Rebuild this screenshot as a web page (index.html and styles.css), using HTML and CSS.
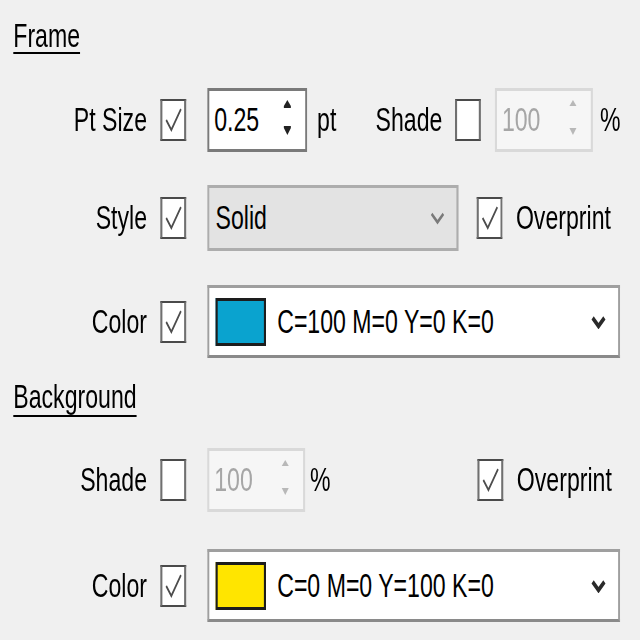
FILE: index.html
```html
<!DOCTYPE html>
<html>
<head>
<meta charset="utf-8">
<link rel="stylesheet" href="styles.css">
</head>
<body>
<div class="frame">
<div class="dialog">
  <div class="heading h1">Frame</div>

  <div class="row r1">
    <span class="label">Pt Size</span>
    <span class="cb"><svg viewBox="0 0 34 42" preserveAspectRatio="none"><polyline points="6,21 14,32 29,9" /></svg></span>
    <div class="spin s1">
      <span class="val">0.25</span>
      <span class="arrows"><svg viewBox="0 0 12 40"><polygon points="6,0 11,6 1,6"/><rect x="1" y="6" width="10" height="2"/><polygon points="1,28 11,28 6,35"/><rect x="1" y="26" width="10" height="2"/></svg></span>
    </div>
    <span class="unit pt">pt</span>
    <span class="label2">Shade</span>
    <span class="cb cb2"></span>
    <div class="spin s2 disabled">
      <span class="val">100</span>
      <span class="arrows"><svg viewBox="0 0 12 40"><polygon points="6,0 11,6 1,6"/><polygon points="1,28 11,28 6,35"/></svg></span>
    </div>
    <span class="unit pct">%</span>
  </div>

  <div class="row r2">
    <span class="label">Style</span>
    <span class="cb"><svg viewBox="0 0 34 42" preserveAspectRatio="none"><polyline points="6,21 14,32 29,9" /></svg></span>
    <div class="drop gray">
      <span class="val">Solid</span>
      <svg class="chev light" viewBox="0 0 16 10"><polyline points="2,2 8,8 14,2"/></svg>
    </div>
    <span class="cb op"><svg viewBox="0 0 34 42" preserveAspectRatio="none"><polyline points="6,21 14,32 29,9" /></svg></span>
    <span class="optext">Overprint</span>
  </div>

  <div class="row r3">
    <span class="label">Color</span>
    <span class="cb"><svg viewBox="0 0 34 42" preserveAspectRatio="none"><polyline points="6,21 14,32 29,9" /></svg></span>
    <div class="drop white">
      <span class="swatch cyan"></span>
      <span class="val ctext">C=100 M=0 Y=0 K=0</span>
      <svg class="chev" viewBox="0 0 16 10"><polyline points="2,2 8,8 14,2"/></svg>
    </div>
  </div>

  <div class="heading h2">Background</div>

  <div class="row r4">
    <span class="label">Shade</span>
    <span class="cb"></span>
    <div class="spin s3 disabled">
      <span class="val">100</span>
      <span class="arrows"><svg viewBox="0 0 12 40"><polygon points="6,0 11,6 1,6"/><polygon points="1,28 11,28 6,35"/></svg></span>
    </div>
    <span class="unit pct2">%</span>
    <span class="cb op2"><svg viewBox="0 0 34 42" preserveAspectRatio="none"><polyline points="6,21 14,32 29,9" /></svg></span>
    <span class="optext">Overprint</span>
  </div>

  <div class="row r5">
    <span class="label">Color</span>
    <span class="cb"><svg viewBox="0 0 34 42" preserveAspectRatio="none"><polyline points="6,21 14,32 29,9" /></svg></span>
    <div class="drop white">
      <span class="swatch yellow"></span>
      <span class="val ctext">C=0 M=0 Y=100 K=0</span>
      <svg class="chev" viewBox="0 0 16 10"><polyline points="2,2 8,8 14,2"/></svg>
    </div>
  </div>
</div>
</div>
</body>
</html>
```

FILE: styles.css
```css
html, body {
  margin: 0;
  padding: 0;
  background: #f0f0f0;
  overflow: hidden;
}
.frame {
  width: 640px;
  height: 640px;
  overflow: hidden;
}
.dialog {
  width: 910px;
  height: 640px;
  transform: scaleX(0.70);
  transform-origin: 0 0;
  font-family: "Liberation Sans", Arial, sans-serif;
  font-size: 33px;
  color: #000;
  display: flex;
  flex-direction: column;
}
.heading {
  margin-left: 19px;
  line-height: 38px;
  height: 38px;
  text-decoration: underline;
  text-decoration-thickness: 2px;
  text-underline-offset: 5px;
}
.h1 { margin-top: 17px; }
.h2 { margin-top: 20px; text-underline-offset: 7px; }
.row {
  display: flex;
  align-items: center;
}
.r1 { margin-top: 33px; height: 64px; }
.r2 { margin-top: 33px; height: 66px; }
.r3 { margin-top: 34px; height: 73px; }
.r4 { margin-top: 32px; height: 64px; }
.r5 { margin-top: 37px; height: 73px; }
.label {
  width: 210px;
  text-align: right;
  flex: none;
}
.cb {
  flex: none;
  width: 37px;
  height: 42px;
  box-sizing: border-box;
  margin-left: 19px;
  background: #fff;
  border: 2px solid #4a4a4a;
  border-left: 3px solid #707070;
  border-right: 3px solid #707070;
  display: flex;
}
.cb svg {
  width: 100%;
  height: 100%;
}
.cb polyline {
  fill: none;
  stroke: #4d4d4d;
  stroke-width: 2.6;
}
.spin {
  flex: none;
  box-sizing: border-box;
  height: 64px;
  margin-left: 30px;
  background: #fff;
  border: 3px solid #7a7a7a;
  display: flex;
  align-items: center;
  padding-left: 7px;
  padding-right: 18px;
}
.spin .val { flex: 1; }
.spin .arrows {
  width: 15px;
  height: 40px;
  display: flex;
}
.spin .arrows svg {
  width: 100%;
  height: 100%;
  fill: #222;
}
.spin.disabled {
  background: #f6f6f6;
  border: 3px solid #d9d9d9;
  color: #a6a6a6;
}
.spin.disabled .arrows svg { fill: #b8b8b8; }
.s1 { width: 143px; }
.s2 { width: 140px; margin-left: 20px; }
.s3 { width: 140px; }
.unit { flex: none; }
.pt { margin-left: 14px; }
.label2 { margin-left: 56px; }
.cb2 { margin-left: 18px; }
.pct { margin-left: 10px; }
.pct2 { margin-left: 7px; }
.drop {
  flex: none;
  box-sizing: border-box;
  margin-left: 30px;
  display: flex;
  align-items: center;
  padding-left: 9px;
}
.drop.gray {
  width: 359px;
  height: 66px;
  background: #e3e3e3;
  border: 3px solid #adadad;
  padding-right: 15px;
}
.drop.white {
  width: 590px;
  height: 73px;
  background: #fff;
  border: 3px solid #9f9f9f;
  border-bottom-color: #8a8a8a;
  padding-right: 16px;
}
.drop .val { flex: 1; }
.chev {
  width: 24px;
  height: 14px;
  flex: none;
}
.chev polyline {
  fill: none;
  stroke: #2a2a2a;
  stroke-width: 3.2;
}
.chev.light polyline { stroke: #7a7a7a; stroke-width: 2.2; }
.swatch {
  flex: none;
  width: 72px;
  height: 48px;
  box-sizing: border-box;
  border: 3px solid #1d1d1d;
  margin-right: 16px;
}
.cyan { background: #0aa3cf; }
.yellow { background: #ffe500; }
.op { margin-left: 26px; }
.op2 { margin-left: 210px; }
.optext { margin-left: 19px; }
```
